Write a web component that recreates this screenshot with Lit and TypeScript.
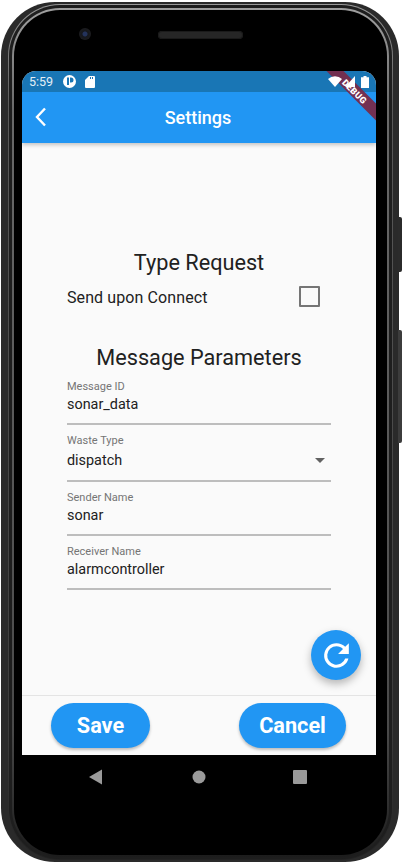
import { LitElement, html, css } from 'lit'
import { customElement, property } from 'lit/decorators.js'

@customElement('form-field')
export class FormField extends LitElement {
  @property() label = ''
  @property() value = ''
  @property({ type: Boolean, reflect: true }) dropdown = false

  static override styles = css`
    :host {
      display: block;
      height: 54px;
    }
    :host([dropdown]) {
      height: 57px;
    }
    .label {
      font-size: 11px;
      line-height: 14px;
      height: 14px;
      color: #757575;
    }
    .value {
      display: flex;
      justify-content: space-between;
      align-items: center;
      height: 21px;
      margin-bottom: 8px;
      font-size: 14.4px;
      color: #212121;
    }
    :host([dropdown]) .value {
      height: 24px;
    }
    .line {
      height: 1.5px;
      background: #bdbdbd;
    }
    svg {
      display: block;
      margin-right: 6px;
      fill: #616161;
    }
  `

  override render() {
    return html`
      <div class="label">${this.label}</div>
      <div class="value">
        <span>${this.value}</span>
        ${this.dropdown
          ? html`<svg width="10" height="5" viewBox="0 0 10 5"><path d="M0 0h10L5 5z" /></svg>`
          : ''}
      </div>
      <div class="line"></div>
    `
  }
}

@customElement('app-root')
export class AppRoot extends LitElement {
  static override styles = css`
    :host {
      display: block;
      width: 403px;
      height: 863px;
      overflow: hidden;
      background: #fff;
      font-family: Roboto, 'Noto Sans', sans-serif;
    }
    .device {
      position: relative;
      box-sizing: border-box;
      width: 398px;
      height: 860px;
      margin: 2px 0 0 1px;
      padding: 2px 6px 2px 7px;
      border-radius: 54px;
      background: #2a2a2a;
    }
    .key {
      position: absolute;
      right: -3px;
      width: 4px;
      background: #2b2b2b;
      border-radius: 0 2px 2px 0;
    }
    .key.power {
      top: 215px;
      height: 55px;
    }
    .key.volume {
      top: 328px;
      height: 113px;
      background: #3c3c3c;
    }
    .ring-outer {
      height: 100%;
      box-sizing: border-box;
      padding: 1px;
      border-radius: 52px;
      background: linear-gradient(#9a9a9a, #5a5a5a 12%, #3c3c3c 85%, #222);
    }
    .band {
      height: 100%;
      box-sizing: border-box;
      padding: 3px 3px 2px;
      border-radius: 51px;
      background: #1e1e1e;
    }
    .ring-inner {
      height: 100%;
      box-sizing: border-box;
      padding: 2px;
      border-radius: 48px;
      background: linear-gradient(#a0a0a0, #6a6a6a 12%, #4a4a4a 85%, #1c1c1c);
    }
    .bezel {
      height: 100%;
      box-sizing: border-box;
      padding-left: 8px;
      border-radius: 46px;
      background: #000;
      display: flex;
      flex-direction: column;
    }
    .top {
      height: 61px;
      flex: none;
      display: flex;
      align-items: flex-start;
      padding-top: 18px;
      box-sizing: border-box;
    }
    .camera {
      width: 12px;
      height: 12px;
      margin-left: 57px;
      border-radius: 50%;
      background: radial-gradient(circle, #24335c 0 2px, #15171c 3px, #1c1c1f 6px);
    }
    .speaker {
      width: 85px;
      height: 8px;
      margin: 3px 0 0 67px;
      border-radius: 4px;
      background: #262626;
      box-shadow: inset 0 0 0 1px #1a1a1a;
    }
    .screen {
      position: relative;
      width: 354px;
      height: 684px;
      flex: none;
      overflow: hidden;
      border-radius: 14px 14px 0 0;
      background: #fafafa;
      display: flex;
      flex-direction: column;
    }
    .head {
      flex: none;
      background: linear-gradient(#1976b5 21px, #2196f3 21px);
      box-shadow: 0 2px 4px rgba(0, 0, 0, 0.22);
    }
    /* sits above the ribbon: the status icons show through it */
    .status {
      position: relative;
      z-index: 3;
      height: 21px;
      display: flex;
      align-items: center;
      padding: 0 7px;
      color: #e3eef6;
      font-size: 12.5px;
    }
    .status svg {
      display: block;
      fill: #fff;
    }
    .status .time {
      width: 34px;
    }
    .status .sd {
      margin-left: 9px;
    }
    .status .spacer {
      flex: 1;
    }
    .status .signal {
      margin-left: 3px;
    }
    .status .battery {
      margin-left: 6px;
    }
    .bar {
      height: 51px;
      box-sizing: border-box;
      padding-right: 2px;
      position: relative;
      display: flex;
      align-items: center;
      justify-content: center;
      color: #fff;
      font-size: 18px;
      font-weight: 500;
    }
    .bar svg {
      position: absolute;
      left: 13px;
      top: 15px;
    }
    .ribbon {
      position: absolute;
      top: 13px;
      right: -28px;
      box-sizing: border-box;
      width: 100px;
      height: 12px;
      padding-left: 3px;
      transform: rotate(45deg);
      background: rgba(118, 44, 76, 0.97);
      color: #fff;
      font-size: 9px;
      line-height: 14px;
      font-weight: 900;
      letter-spacing: 0.3px;
      text-align: center;
      z-index: 2;
    }
    .content {
      flex: 1;
      padding: 107px 45px 0;
      color: #212121;
    }
    h2 {
      margin: 0;
      font-size: 21.7px;
      font-weight: 400;
      line-height: 26px;
      text-align: center;
      color: #212121;
    }
    h2.params {
      margin: 37px 0 9px;
    }
    .connect {
      display: flex;
      justify-content: space-between;
      align-items: center;
      height: 22px;
      margin-top: 10px;
      padding-right: 11px;
      font-size: 16px;
      letter-spacing: 0.1px;
    }
    .check {
      box-sizing: border-box;
      width: 21px;
      height: 21px;
      margin-top: -1px;
      border: 2px solid #757575;
      border-radius: 1px;
    }
    .fields {
      display: flex;
      flex-direction: column;
    }
    .fab {
      position: absolute;
      left: 289px;
      top: 559px;
      width: 50px;
      height: 50px;
      border-radius: 50%;
      background: #2196f3;
      display: flex;
      align-items: center;
      justify-content: center;
      box-shadow: 0 4px 8px rgba(0, 0, 0, 0.28);
    }
    .footer {
      height: 60px;
      flex: none;
      box-sizing: border-box;
      border-top: 1px solid #e4e4e4;
      display: flex;
      justify-content: space-between;
      align-items: flex-start;
      padding: 7px 30px 0 29px;
    }
    .btn {
      height: 45px;
      border-radius: 23px;
      background: #2196f3;
      color: #fff;
      font-size: 21.7px;
      font-weight: 700;
      line-height: 45px;
      text-align: center;
      box-shadow: 0 2px 3px rgba(0, 0, 0, 0.25);
    }
    .btn.save {
      width: 99px;
    }
    .btn.cancel {
      width: 107px;
    }
    .nav {
      display: block;
      fill: #9a9a9a;
    }
  `

  override render() {
    return html`
      <div class="device">
        <div class="key power"></div>
        <div class="key volume"></div>
        <div class="ring-outer">
          <div class="band">
            <div class="ring-inner">
              <div class="bezel">
                <div class="top">
                  <div class="camera"></div>
                  <div class="speaker"></div>
                </div>
                <div class="screen">
                  <div class="head">
                    <div class="status">
                      <span class="time">5:59</span>
                      <svg width="13" height="13" viewBox="0 0 13 13">
                        <path fill-rule="evenodd" d="M6.500 0a6.500 6.500 0 1 1 0 13a6.500 6.500 0 0 1 0-13zM4 2.500v7.500h2V2.500zM7 2.500v5h1a2.500 2.500 0 0 0 0-5z" />
                      </svg>
                      <svg class="sd" width="10" height="12" viewBox="0 0 10 12">
                        <path fill-rule="evenodd" d="M4 0h5a1 1 0 0 1 1 1v10a1 1 0 0 1-1 1H1a1 1 0 0 1-1-1V4zM5 1v2h1V1zM7 1v2h1V1z" />
                      </svg>
                      <span class="spacer"></span>
                      <svg width="14" height="11" viewBox="0 0 14 11">
                        <path d="M0 3a10.500 10.500 0 0 1 14 0L7 11z" />
                      </svg>
                      <svg class="signal" width="10" height="11" viewBox="0 0 10 11">
                        <path d="M10 0v11H0z" />
                      </svg>
                      <svg class="battery" width="8" height="12" viewBox="0 0 8 12">
                        <path d="M2.500 0h3v1.200H8V12H0V1.200h2.500z" />
                      </svg>
                    </div>
                    <div class="bar">
                      <svg width="12" height="20" viewBox="0 0 12 20">
                        <path d="M10 1.500L2 10l8 8.500" fill="none" stroke="#fff" stroke-width="2.400" />
                      </svg>
                      Settings
                    </div>
                  </div>
                  <div class="ribbon">DEBUG</div>
                  <div class="content">
                    <h2>Type Request</h2>
                    <div class="connect">
                      <span>Send upon Connect</span>
                      <span class="check"></span>
                    </div>
                    <h2 class="params">Message Parameters</h2>
                    <div class="fields">
                      <form-field label="Message ID" value="sonar_data"></form-field>
                      <form-field label="Waste Type" value="dispatch" dropdown></form-field>
                      <form-field label="Sender Name" value="sonar"></form-field>
                      <form-field label="Receiver Name" value="alarmcontroller"></form-field>
                    </div>
                  </div>
                  <div class="fab">
                    <svg width="37" height="37" viewBox="0 0 24 24" fill="#fff">
                      <path d="M17.650 6.350A7.960 7.960 0 0 0 12 4a8 8 0 1 0 7.730 10h-2.080A6 6 0 1 1 12 6c1.660 0 3.140.690 4.220 1.780L13 11h7V4z" />
                    </svg>
                  </div>
                  <div class="footer">
                    <div class="btn save">Save</div>
                    <div class="btn cancel">Cancel</div>
                  </div>
                </div>
                <svg class="nav" width="354" height="45" viewBox="0 0 354 45">
                  <path d="M67 22l13-7.500v15z" />
                  <circle cx="177" cy="22" r="6.500" />
                  <rect x="271" y="15" width="14" height="14" rx="1" />
                </svg>
              </div>
            </div>
          </div>
        </div>
      </div>
    `
  }
}
